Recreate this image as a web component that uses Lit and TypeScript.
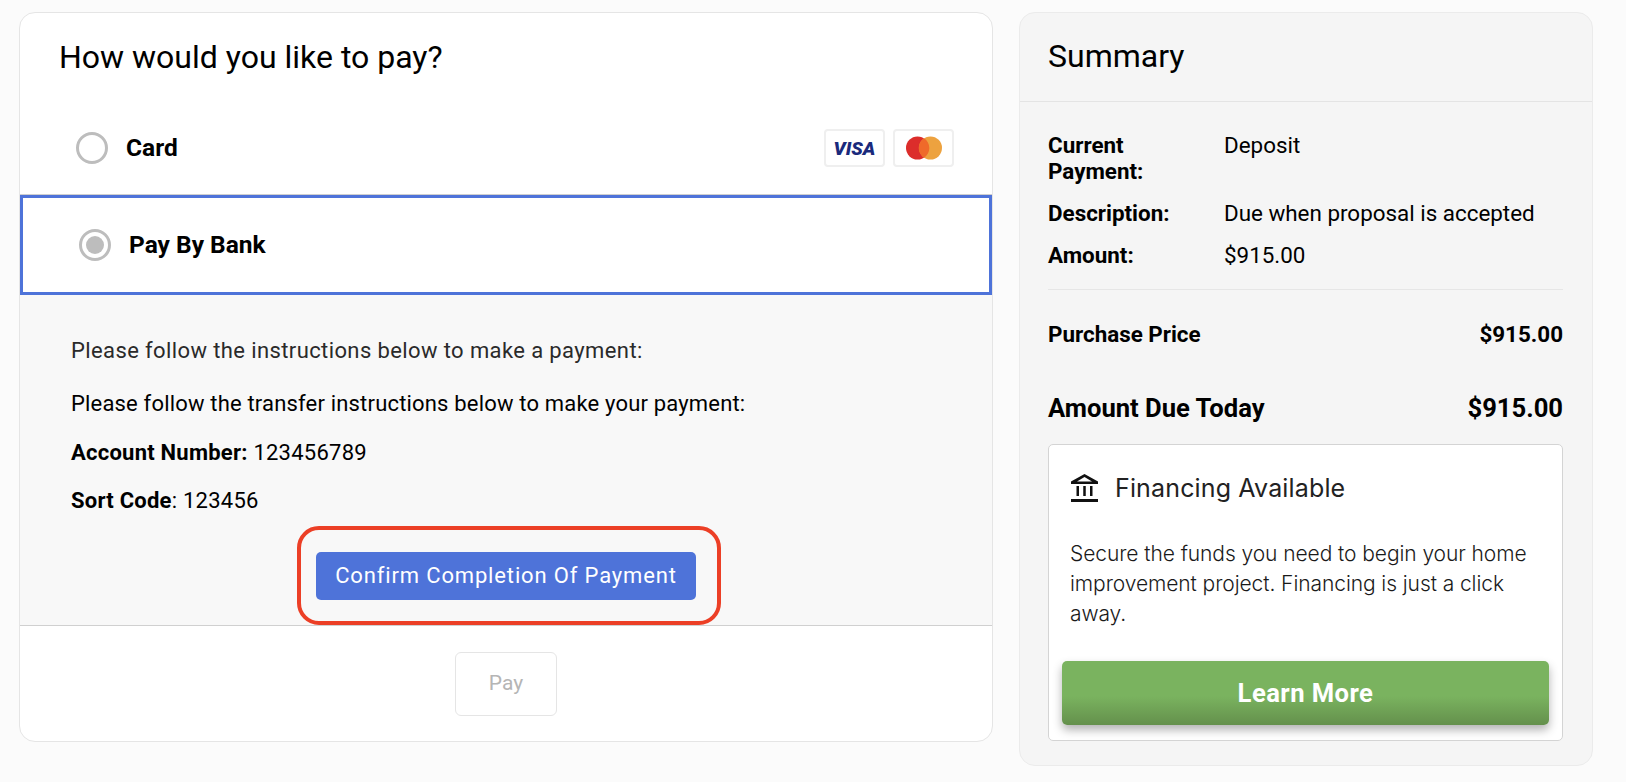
import { LitElement, html, css } from "lit";
import { customElement } from "lit/decorators.js";

@customElement("app-root")
export class AppRoot extends LitElement {
  static styles = css`
    :host { display: block; width: 1626px; height: 782px; background: #fbfbfb; font-family: Roboto, "Liberation Sans", sans-serif; color: #000; overflow: hidden; }
    .page { display: flex; align-items: flex-start; gap: 26px; padding: 12px 0 0 19px; }
    .left { width: 974px; height: 730px; box-sizing: border-box; background: #fff; border: 1px solid #e5e5e5; border-radius: 16px; overflow: hidden; display: flex; flex-direction: column; }
    .h { font-size: 32px; line-height: 38px; margin: 0; padding: 25px 0 0 39px; font-weight: 400; }
    .card { display: flex; align-items: center; gap: 18px; height: 119px; padding: 26px 38px 0 56px; box-sizing: border-box; border-bottom: 1px solid #cfcfcf; flex: none; }
    .radio { width: 32px; height: 32px; border-radius: 50%; border: 3px solid #bdbdbd; box-sizing: border-box; display: flex; align-items: center; justify-content: center; flex: none; }
    .dot { width: 18px; height: 18px; border-radius: 50%; background: #bdbdbd; }
    .lab { font-size: 24.5px; font-weight: 700; padding-bottom: 2px; }
    .logos { margin-left: auto; display: flex; gap: 8px; }
    .logo { width: 61px; height: 38px; box-sizing: border-box; border: 2px solid #efefef; border-radius: 4px; background: #fff; display: flex; align-items: center; justify-content: center; }
    .visa { font: italic 900 19px Roboto, "Liberation Sans", sans-serif; color: #1a2a7c; }
    .bank { display: flex; align-items: center; gap: 18px; height: 100px; box-sizing: border-box; border: 3px solid #4e73d9; padding-left: 56px; flex: none; }
    .panel { background: #f8f8f8; flex: 1; padding: 43px 51px 0 51px; border-bottom: 1px solid #d0d0d0; font-size: 22px; }
    .panel p { margin: 0 0 22px; line-height: 26px; letter-spacing: .24px; }
    .panel p.first { margin-bottom: 27px; letter-spacing: .39px; color: #2a2a2a; }
    .panel p.second { margin-bottom: 23px; letter-spacing: .18px; }
    .panel p.last { margin-bottom: 38px; }
    .btnwrap { display: flex; justify-content: center; }
    .ringbox { position: relative; }
    .ring { position: absolute; inset: -26px -25px -25px -19px; border: 4px solid #ec3f26; border-radius: 22px; pointer-events: none; }
    .confirm { display: block; background: #4e73d9; color: #fff; border: 0; border-radius: 5px; font: 400 22px Roboto, sans-serif; letter-spacing: .85px; width: 380px; height: 48px; padding: 0 0 2px; }
    .foot { height: 115px; display: flex; align-items: center; justify-content: center; flex: none; }
    .pay { width: 102px; height: 64px; border: 1px solid #e5e5e5; border-radius: 6px; background: #fff; color: #b5b5b5; font: 400 21px Roboto, sans-serif; padding: 0 0 2px; }
    .right { width: 574px; height: 754px; box-sizing: border-box; background: #f5f5f5; border: 1px solid #ebebeb; border-radius: 16px; overflow: hidden; }
    .rh { font-size: 32px; height: 89px; line-height: 86px; padding-left: 28px; border-bottom: 1px solid #e4e4e4; box-sizing: border-box; }
    .rb { padding: 30px 29px 0 28px; }
    .grid { display: grid; grid-template-columns: 164px 1fr; column-gap: 12px; row-gap: 16px; font-size: 22.4px; line-height: 26px; padding-bottom: 21px; border-bottom: 1px solid #e6e6e6; }
    .grid b { font-weight: 700; }
    .row { display: flex; justify-content: space-between; font-size: 22.4px; font-weight: 700; margin-top: 31px; line-height: 27px; }
    .row.big { font-size: 25.6px; margin-top: 45px; line-height: 30px; }
    .fin { margin-top: 21px; background: #fff; border: 1px solid #d4d4d4; border-radius: 5px; height: 297px; box-sizing: border-box; padding: 0 13px; }
    .ft { display: flex; align-items: center; gap: 17px; font-family: Inter, sans-serif; font-weight: 400; font-size: 25px; letter-spacing: .15px; color: #222; padding: 28px 0 0 9px; line-height: 30px; }
    .ft svg { flex: none; }
    .fp { font-family: Inter, sans-serif; font-weight: 300; color: #1a1a1a; font-size: 21px; letter-spacing: -.08px; line-height: 30px; margin: 36px 0 0 8px; }
    .learn { display: block; width: 100%; height: 64px; margin-top: 32px; border: 0; border-radius: 5px; color: #fff; font: 700 25.6px Roboto, sans-serif; letter-spacing: .45px; background: linear-gradient(#7ab35f 55%, #64904c); box-shadow: 0 5px 10px rgba(0,0,0,.3); }
  `;
  render() {
    return html`<div class="page">
      <div class="left">
        <h1 class="h">How would you like to pay?</h1>
        <div class="card"><span class="radio"></span><span class="lab">Card</span>
          <div class="logos">
            <span class="logo"><span class="visa">VISA</span></span>
            <span class="logo"><svg width="36" height="24" viewBox="0 0 36 24"><circle cx="11.500" cy="12" r="11.500" fill="#dc2d2b"/><circle cx="24.500" cy="12" r="11.500" fill="#eda23f"/><path fill="#ef6a2a" d="M18 2.300a11.500 11.500 0 0 1 0 19.400a11.500 11.500 0 0 1 0-19.400z"/></svg></span>
          </div></div>
        <div class="bank"><span class="radio"><span class="dot"></span></span><span class="lab">Pay By Bank</span></div>
        <div class="panel">
          <p class="first">Please follow the instructions below to make a payment:</p>
          <p class="second">Please follow the transfer instructions below to make your payment:</p>
          <p><b>Account Number:</b> 123456789</p>
          <p class="last"><b>Sort Code</b>: 123456</p>
          <div class="btnwrap"><div class="ringbox"><button class="confirm">Confirm Completion Of Payment</button><span class="ring"></span></div></div>
        </div>
        <div class="foot"><button class="pay">Pay</button></div>
      </div>
      <div class="right">
        <div class="rh">Summary</div>
        <div class="rb">
          <div class="grid"><b>Current Payment:</b><span>Deposit</span><b>Description:</b><span>Due when proposal is accepted</span><b>Amount:</b><span>$915.00</span></div>
          <div class="row"><span>Purchase Price</span><span>$915.00</span></div>
          <div class="row big"><span>Amount Due Today</span><span>$915.00</span></div>
          <div class="fin">
            <div class="ft"><svg width="27" height="28" viewBox="0 0 27 28"><path fill="#111" fill-rule="evenodd" d="M13.500 0 27 7.500V10H0V7.500zM13.500 3 6 7.500h15z"/><path fill="#111" d="M5.500 12h2.500v10H5.500zM12.250 12h2.500v10h-2.500zM19 12h2.500v10H19zM0 25h27v3H0z"/></svg>Financing Available</div>
            <p class="fp">Secure the funds you need to begin your home improvement project. Financing is just a click away.</p>
            <button class="learn">Learn More</button>
          </div>
        </div>
      </div>
    </div>`;
  }
}
